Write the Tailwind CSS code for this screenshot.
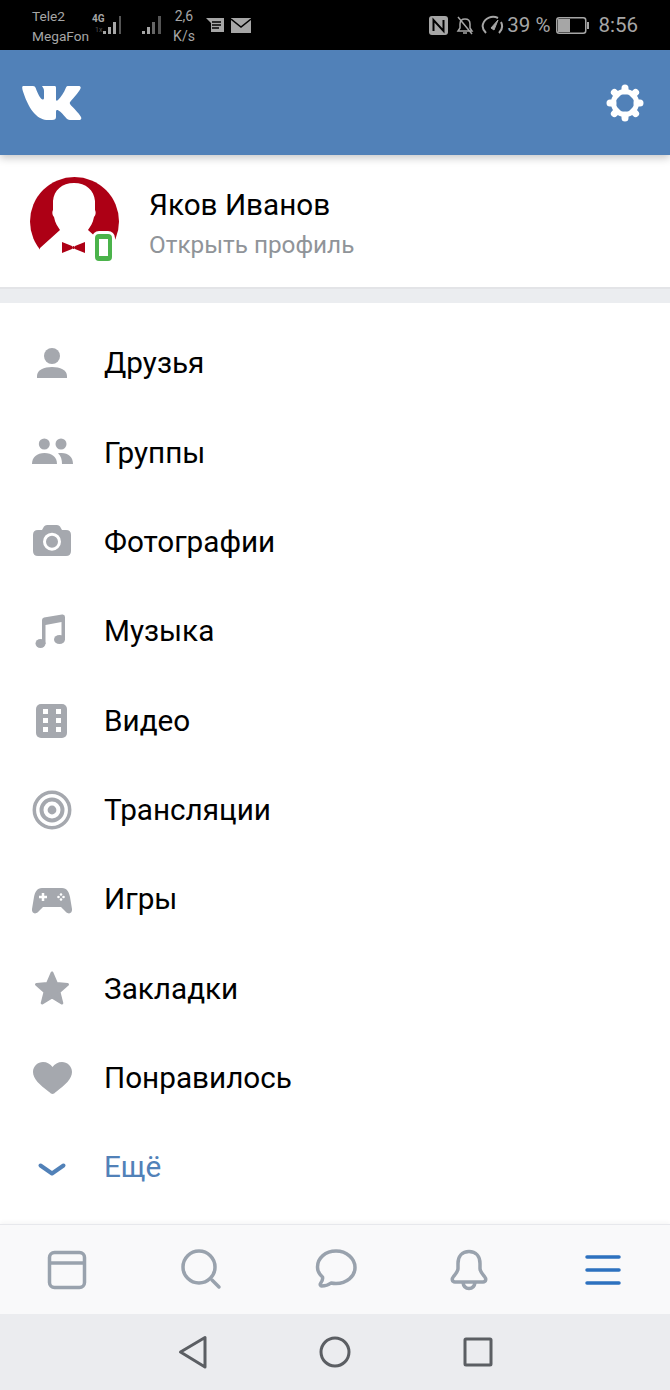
<!doctype html>
<html lang="ru">
  <head>
    <meta charset="UTF-8" />
    <title>VK</title>
    <script src="https://cdn.jsdelivr.net/npm/@tailwindcss/browser@4"></script>
  </head>
  <body class="h-[1390px] w-[670px] overflow-hidden bg-white font-['Roboto',sans-serif]">
    <!-- status bar -->
    <div class="relative flex h-[50px] items-center bg-black text-[#a6a6a6]">
      <div class="ml-[32px] w-[60px] pt-[1px] text-[13.7px] leading-[20px]">
        <div>Tele2</div>
        <div>MegaFon</div>
      </div>
      <div class="relative h-[50px] w-[30px]">
        <span class="absolute top-[14px] left-0 text-[10px] leading-[10px] font-bold">4G</span>
        <span class="absolute top-[26px] left-[3px] text-[7px] leading-[8px] text-[#555]">1x</span>
        <svg class="absolute top-0 left-0" width="32" height="50" viewBox="0 0 32 50" fill="#a6a6a6">
          <rect x="11" y="31" width="3" height="3" />
          <rect x="16" y="27" width="3" height="7" />
          <rect x="21" y="22" width="3" height="12" />
          <rect x="27" y="16" width="2" height="18" fill="#555" />
        </svg>
      </div>
      <svg class="ml-[19px]" width="22" height="50" viewBox="0 0 22 50" fill="#a6a6a6">
        <rect x="1" y="31" width="3" height="3" />
        <rect x="6" y="27" width="3" height="7" />
        <rect x="11" y="22" width="3" height="12" fill="#666" />
        <rect x="17" y="16" width="3" height="18" fill="#555" />
      </svg>
      <div class="ml-[10px] w-[22px] pt-[1px] text-center text-[14px] leading-[20px]">
        <div>2,6</div>
        <div>K/s</div>
      </div>
      <svg class="ml-[11px]" width="18" height="14" viewBox="0 0 18 14">
        <path d="M0 0H18V14H5V5z" fill="#a6a6a6" />
        <path d="M6 4H15M6 7H15M6 10H13" stroke="#000" stroke-width="1.5" />
      </svg>
      <svg class="ml-[7px]" width="20" height="15" viewBox="0 0 20 15">
        <rect width="20" height="15" fill="#a6a6a6" />
        <path d="M0 1L10 9L20 1" fill="none" stroke="#000" stroke-width="1.5" />
      </svg>

      <div class="ml-auto flex items-center">
        <svg width="19" height="19" viewBox="0 0 19 19">
          <rect width="19" height="19" rx="3" fill="#a6a6a6" />
          <path d="M4.500 15V4L14.500 15V4" fill="none" stroke="#000" stroke-width="2" />
        </svg>
        <svg class="ml-[8px]" width="18" height="19" viewBox="0 0 18 19" fill="none" stroke="#a6a6a6" stroke-width="1.5">
          <path d="M2 15H16L14 12V8C14 5 12 3 9 3S4 5 4 8V12zM7 17H11M2 1L16 18" />
        </svg>
        <svg class="ml-[7px]" width="23" height="20" viewBox="0 0 23 20" fill="none" stroke="#a6a6a6" stroke-width="2">
          <path d="M5 18C2 15 1 12 2 9C4 3 11 0 17 3M20 7C22 11 21 15 18 18" />
          <path d="M10 13L17 5L13 15z" fill="#a6a6a6" stroke-width="1" />
        </svg>
        <span class="ml-[3px] text-[20.5px] leading-[24px] whitespace-nowrap">39 %</span>
        <svg class="ml-[6px]" width="33" height="17" viewBox="0 0 33 17" fill="none">
          <rect x=".75" y=".75" width="29" height="15.500" rx="2.500" stroke="#a6a6a6" stroke-width="1.500" />
          <rect x="2" y="2" width="12" height="13" fill="#a6a6a6" />
          <rect x="31" y="5" width="2" height="7" fill="#a6a6a6" />
        </svg>
        <span class="mr-[32px] ml-[9px] text-[20.5px] leading-[24px]">8:56</span>
      </div>
    </div>

    <!-- header -->
    <div class="flex h-[105px] items-center justify-between bg-[#5181b8] pr-[25px] pl-[22px] shadow-[0_3px_8px_rgba(0,0,0,0.22)]">
      <svg width="60" height="34" viewBox="0 0 60 34" fill="#fff">
        <path d="M1.500 0H11C12.500 0 13.200.7 13.700 2C15.500 7 18 12.500 20.500 13.500C22 14 22 12.500 22 11V5C22 3 21 1.500 20 0H32.500C33.500 0 34 .5 34 2V13.500C34 15 35 15 36 14C39 11 42 6.500 44 1.500C44.500.3 45.300 0 46.500 0H56.500C58.500 0 59 1 58.500 2.500C57 6 51.500 12 48.500 15.500C47.500 16.700 47.500 17.500 48.500 18.700C51 21.500 57 27 59 31C59.800 32.700 59 34 57 34H48C46 34 45 33 43.500 31.300C41.500 29 39 26 36.500 24.500C35 23.700 34 24 34 26V31C34 33 33 34 30 34H26C17 34 8 27 1 5.500C.2 3 -.5 0 1.500 0Z" />
      </svg>
      <svg width="40" height="40" viewBox="0 0 40 40" fill="none" stroke="#fff">
        <circle cx="20" cy="20" r="11.500" stroke-width="5" />
        <g stroke-width="7" stroke-linecap="round">
          <path d="M20 8V5M20 32V35M8 20H5M32 20H35M11.500 11.500L9.400 9.400M28.500 11.500L30.600 9.400M11.500 28.500L9.400 30.600M28.500 28.500L30.600 30.600" />
        </g>
      </svg>
    </div>

    <!-- profile -->
    <div class="flex h-[134px] items-center border-b-2 border-[#e3e4e7] pl-[30px]">
      <div class="relative h-[89px] w-[89px]">
        <svg width="89" height="89" viewBox="0 0 89 89">
          <circle cx="44.500" cy="44.500" r="44.500" fill="#ad0015" />
          <path d="M44 6C32 6 24 13 23 24V33C22 35 22 38 24 40C25 46 28 50 30 53L10 71V89H78V71L58 53C60 50 63 46 64 40C66 38 66 35 65 33V24C64 13 56 6 44 6Z" fill="#fff" />
          <path d="M32 65L42 69V72L32 76ZM55 65L45 69V72L55 76Z" fill="#ad0015" />
          <circle cx="43.500" cy="70.500" r="1.500" fill="#ad0015" />
        </svg>
        <div class="absolute top-[54px] left-[62px] flex h-[33px] w-[23px] items-center justify-center rounded-[7px] bg-white">
          <div class="h-[27px] w-[17px] rounded-[4px] border-x-[4px] border-y-[5px] border-[#4bb34b] bg-white"></div>
        </div>
      </div>
      <div class="ml-[30px] pt-[4px]">
        <div class="text-[29.7px] leading-[36px] text-black">Яков Иванов</div>
        <div class="mt-[8px] text-[24.3px] leading-[28px] text-[#909499]">Открыть профиль</div>
      </div>
    </div>
    <div class="h-[14px] bg-[#ebedf0]"></div>

    <!-- menu -->
    <ul class="pt-[16px] pb-[12px] text-[29.7px] text-black">
      <li class="flex h-[89.33px] items-center pl-[30px]">
        <svg class="mr-[30px]" width="44" height="40" viewBox="0 0 44 40" fill="#a5a8ae">
          <circle cx="22" cy="12" r="8" />
          <path d="M7 34V32C7 26 14 23 22 23S37 26 37 32V34Z" />
        </svg>
        Друзья
      </li>
      <li class="flex h-[89.33px] items-center pl-[30px]">
        <svg class="mr-[30px]" width="44" height="40" viewBox="0 0 44 40" fill="#a5a8ae">
          <circle cx="14.300" cy="11" r="5.500" />
          <circle cx="31" cy="11" r="5.500" />
          <path d="M2 31C2 24 7 20 14.500 20S27 24 27 31Z" />
          <path d="M28 20.300C29 20.100 30 20 31.500 20C38.500 20 43 24 43 31H32C32 27 31 23 28 20.300Z" />
        </svg>
        Группы
      </li>
      <li class="flex h-[89.33px] items-center pl-[30px]">
        <svg class="mr-[30px]" width="44" height="40" viewBox="0 0 44 40" fill="#a5a8ae">
          <path d="M8 8H12L14 4.500Q15 3 17 3H27Q29 3 30 4.500L32 8H36Q41 8 41 13V29Q41 34 36 34H8Q3 34 3 29V13Q3 8 8 8Z" />
          <circle cx="22" cy="19.700" r="7.500" fill="none" stroke="#fff" stroke-width="3" />
        </svg>
        Фотографии
      </li>
      <li class="flex h-[89.33px] items-center pl-[30px]">
        <svg class="mr-[30px]" width="44" height="40" viewBox="0 0 44 40" fill="#a5a8ae">
          <path d="M12 8Q12 6 14 5.500L32 2.500Q35 2 35 5V28H31.500V10L15.500 13V32H12Z" />
          <ellipse cx="10.500" cy="31.500" rx="5" ry="4.500" />
          <ellipse cx="29.500" cy="27.500" rx="5.500" ry="4.500" />
        </svg>
        Музыка
      </li>
      <li class="flex h-[89.33px] items-center pl-[30px]">
        <svg class="mr-[30px]" width="44" height="40" viewBox="0 0 44 40">
          <rect x="6" y="3" width="31" height="34" rx="5" fill="#a5a8ae" />
          <g fill="#fff">
            <rect x="13" y="8" width="5" height="5" />
            <rect x="13" y="17" width="5" height="5" />
            <rect x="13" y="26" width="5" height="5" />
            <rect x="26" y="8" width="5" height="5" />
            <rect x="26" y="17" width="5" height="5" />
            <rect x="26" y="26" width="5" height="5" />
          </g>
        </svg>
        Видео
      </li>
      <li class="flex h-[89.33px] items-center pl-[30px]">
        <svg class="mr-[30px]" width="44" height="40" viewBox="0 0 44 40" fill="none" stroke="#a5a8ae">
          <circle cx="22" cy="20" r="17.700" stroke-width="3.500" />
          <circle cx="22" cy="20" r="10.500" stroke-width="4" />
          <circle cx="22" cy="20" r="4.400" fill="#a5a8ae" stroke="none" />
        </svg>
        Трансляции
      </li>
      <li class="flex h-[89.33px] items-center pl-[30px]">
        <svg class="mr-[30px]" width="44" height="40" viewBox="0 0 44 40" fill="#a5a8ae">
          <path d="M12 8H32C37 8 39 12 40 17L42 29C42.500 33 39 35 36 32L31 27H13L8 32C5 35 1.500 33 2 29L4 17C5 12 7 8 12 8Z" />
          <path d="M13 13V21M9 17H17" stroke="#fff" stroke-width="2.500" />
          <g fill="#fff">
            <circle cx="31" cy="14.500" r="1.300" />
            <circle cx="31" cy="19.500" r="1.300" />
            <circle cx="28.500" cy="17" r="1.300" />
            <circle cx="33.500" cy="17" r="1.300" />
          </g>
        </svg>
        Игры
      </li>
      <li class="flex h-[89.33px] items-center pl-[30px]">
        <svg class="mr-[30px]" width="44" height="40" viewBox="0 0 44 40">
          <path d="M22 4L26.500 14.500L37.500 15.500L29 23L31.800 34L22 28L12.200 34L15 23L6.500 15.500L17.500 14.500Z" fill="#a5a8ae" stroke="#a5a8ae" stroke-width="3" stroke-linejoin="round" />
        </svg>
        Закладки
      </li>
      <li class="flex h-[89.33px] items-center pl-[30px]">
        <svg class="mr-[30px]" width="44" height="40" viewBox="0 0 44 40" fill="#a5a8ae">
          <path d="M22.500 36C21.500 36 20.500 35.200 18.500 33.500C10 27 3 21 3 14C3 8 8 4 13 4C17 4 20.500 6 22.500 9C24.500 6 28 4 32 4C37 4 42 8 42 14C42 21 35 27 26.500 33.500C24.500 35.200 23.500 36 22.500 36Z" />
        </svg>
        Понравилось
      </li>
      <li class="flex h-[89.33px] items-center pl-[30px] text-[#5181b8]">
        <svg class="mr-[30px]" width="44" height="40" viewBox="0 0 44 40" fill="none" stroke="#5181b8" stroke-width="4" stroke-linecap="round" stroke-linejoin="round">
          <path d="M10.500 17.500L22 25.500L33.500 17.500" />
        </svg>
        Ещё
      </li>
    </ul>

    <!-- tab bar -->
    <div class="grid h-[90px] grid-cols-5 place-items-center border-t border-[#e7e8ec] bg-[#f9f9fa] shadow-[0_-2px_4px_rgba(0,0,0,0.04)]">
      <svg width="44" height="44" viewBox="0 0 44 44" fill="none" stroke="#99a2ad" stroke-width="3.500">
        <rect x="4.500" y="4.500" width="35" height="35" rx="5" />
        <path d="M4.500 15H39.500" />
      </svg>
      <svg width="44" height="44" viewBox="0 0 44 44" fill="none" stroke="#99a2ad" stroke-width="3.500" stroke-linecap="round">
        <circle cx="20" cy="19" r="16" />
        <path d="M33 32L40 39" />
      </svg>
      <svg width="44" height="44" viewBox="0 0 44 44" fill="none" stroke="#99a2ad" stroke-width="3.500" stroke-linejoin="round">
        <path d="M23 3C12.500 3 4.500 10 4.500 19C4.500 23 6.500 26.500 9.500 29C10 31 9 33.500 7.500 35.500C6.800 36.500 7.500 38 8.500 38C12.500 38 15.500 37 18 35C19.500 35.300 21.300 35.500 23 35.500C33.500 35.500 42 28.500 42 19.500S33.500 3 23 3Z" />
      </svg>
      <svg width="44" height="44" viewBox="0 0 44 44" fill="none" stroke="#99a2ad" stroke-width="3.500" stroke-linejoin="round">
        <path d="M22 3.500C15 3.500 11 8.500 11 15.500V20.500C11 23.500 9 25.500 6.500 28.500C4.500 31 5 34 8 34H36C39 34 39.500 31 37.500 28.500C35 25.500 33 23.500 33 20.500V15.500C33 8.500 29 3.500 22 3.500Z" />
        <path d="M16 34.500C16.500 38.500 19 40.500 22 40.500S27.500 38.500 28 34.500" />
      </svg>
      <svg width="44" height="44" viewBox="0 0 44 44" fill="none" stroke="#2d71bf" stroke-width="3.500" stroke-linecap="round">
        <path d="M6 9H38M6 22H38M6 35H38" />
      </svg>
    </div>

    <!-- android nav -->
    <div class="flex h-[76px] items-center justify-center gap-[98px] bg-[#ebecef]">
      <svg width="44" height="44" viewBox="0 0 44 44" fill="none" stroke="#5b5e63" stroke-width="3" stroke-linejoin="round">
        <path d="M9.500 22L34 7.500V37Z" />
      </svg>
      <svg width="44" height="44" viewBox="0 0 44 44" fill="none" stroke="#5b5e63" stroke-width="3">
        <circle cx="22" cy="22" r="14" />
      </svg>
      <svg width="44" height="44" viewBox="0 0 44 44" fill="none" stroke="#5b5e63" stroke-width="3" stroke-linejoin="round">
        <rect x="10" y="9" width="26" height="26" rx="1" />
      </svg>
    </div>
  </body>
</html>
